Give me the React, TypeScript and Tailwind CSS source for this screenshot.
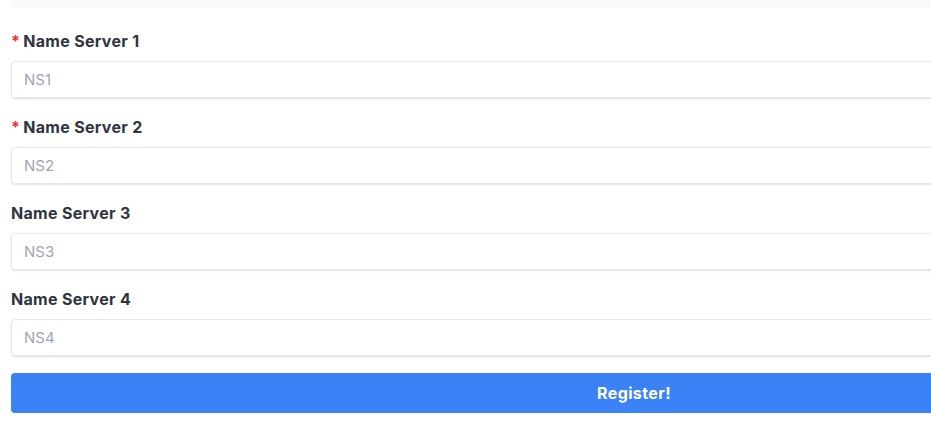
const servers = [
  { label: 'Name Server 1', placeholder: 'NS1', required: true },
  { label: 'Name Server 2', placeholder: 'NS2', required: true },
  { label: 'Name Server 3', placeholder: 'NS3', required: false },
  { label: 'Name Server 4', placeholder: 'NS4', required: false },
];

export default function App() {
  return (
    <div className="w-[931px] h-[425px] overflow-hidden bg-white" style={{ fontFamily: 'Inter, "Noto Sans", sans-serif' }}>
      <div className="w-[1268px] px-[11px]">
        {/* Top panel (cut off) */}
        <div className="h-[8px] bg-[#f8f9fb] rounded-b-md" />

        <form className="mt-[22px]">
          {servers.map((s) => (
            <div key={s.label} className="mb-[18px]">
              <label className="flex items-center h-[22px] mb-[9px] text-[16px] tracking-[0.3px] font-bold text-[#2f3441]">
                {s.required && <span className="text-red-500 mr-[3px]">*</span>}
                {s.label}
              </label>
              <input
                type="text"
                placeholder={s.placeholder}
                className="w-full h-[37px] px-[12px] text-[15px] border border-[#e5e7eb] rounded-[4px] shadow-[0_1px_2px_rgba(0,0,0,0.12)] placeholder:text-[#a0a5b0] focus:outline-none"
              />
            </div>
          ))}
          <button
            type="button"
            className="w-full h-[40px] -mt-[1px] bg-[#3b82f6] text-white text-[16px] tracking-[0.4px] font-bold rounded-[4px]"
          >
            Register!
          </button>
        </form>
      </div>
    </div>
  );
}
